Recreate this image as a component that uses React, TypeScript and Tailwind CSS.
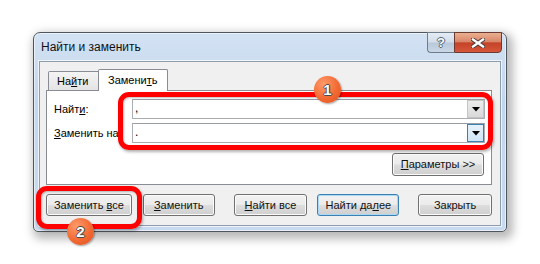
import type { ReactNode } from 'react'

const btnBase =
  'h-[22px] flex items-center justify-center rounded-[3px] border bg-[linear-gradient(180deg,#f2f2f2_0%,#ebebeb_48%,#dddddd_52%,#cfcfcf_100%)] text-[11px] leading-none text-[#111]'

function Btn({ cls, children, def }: { cls: string; children: ReactNode; def?: boolean }) {
  return (
    <div
      className={`${btnBase} ${cls} ${def ? 'border-[#3c7fb1] shadow-[inset_0_0_0_1px_#a9d9f5]' : 'border-[#707070] shadow-[inset_0_0_0_1px_#fbfbfb]'}`}
    >
      <span className="whitespace-pre">{children}</span>
    </div>
  )
}

function Combo({ value, hot }: { value: string; hot?: boolean }) {
  return (
    <div className="flex-1 h-[20px] flex border border-[#abadb3] border-t-[#9a9da5] bg-white">
      <div className="flex-1 pl-[2px] text-[12px] leading-[17px]">{value}</div>
      <div
        className={`w-[17px] h-full flex items-center justify-center border ${hot ? 'border-[#3c7fb1] bg-[linear-gradient(180deg,#e6f2fb_0%,#cfe6f8_100%)]' : 'border-[#c4c4c4] bg-[linear-gradient(180deg,#ececec_0%,#d9d9d9_100%)]'}`}
      >
        <svg width="8" height="5" viewBox="0 0 8 5">
          <path d="M0 0 L8 0 L4 4.5 Z" fill="#000" />
        </svg>
      </div>
    </div>
  )
}

function Badge({ n, cls }: { n: string; cls: string }) {
  return (
    <div
      className={`absolute ${cls} w-[27px] h-[27px] rounded-full flex items-center justify-center bg-[radial-gradient(circle_at_35%_30%,#ff9a6a_0%,#f26a33_55%,#e2501d_100%)] shadow-[1px_1px_2px_rgba(0,0,0,0.35)]`}
    >
      <span className="text-white font-bold text-[15px] leading-none [text-shadow:1px_0_#4a4a4a,-1px_0_#4a4a4a,0_1px_#4a4a4a,0_-1px_#4a4a4a]">
        {n}
      </span>
    </div>
  )
}

export default function App() {
  return (
    <div className="relative w-[540px] h-[264px] overflow-hidden bg-white font-['Liberation_Sans',Arial,sans-serif] text-[11px] text-black">
      <div className="pl-[33px] pt-[32px]">
        {/* окно */}
        <div className="w-[474px] h-[200px] flex flex-col rounded-t-[7px] rounded-b-[5px] border border-[#4f555c] bg-[linear-gradient(180deg,#d3e2f3_0%,#c2d6ed_35%,#c8daef_100%)] px-[5px] pb-[5px] shadow-[3px_4px_10px_3px_rgba(0,0,0,0.28),inset_0_0_0_1px_rgba(255,255,255,0.55)]">
          <div className="h-[28px] flex items-start justify-between">
            <span className="pl-[2px] mt-[6px] text-[12px] leading-[16px] text-[#111]">Найти и заменить</span>
            <div className="-mt-px -mr-px flex">
              <div className="w-[27px] h-[21px] flex items-center justify-center border border-[#6f7c8b] border-r-0 rounded-bl-[4px] bg-[linear-gradient(180deg,#e4ecf4_0%,#d3deea_48%,#b9c9da_52%,#c9d7e5_100%)]">
                <span className="text-white font-bold text-[13px] leading-none [text-shadow:1px_0_#55606c,-1px_0_#55606c,0_1px_#55606c,0_-1px_#55606c]">?</span>
              </div>
              <div className="w-[48px] h-[21px] flex items-center justify-center border border-[#6b3b33] rounded-br-[4px] bg-[linear-gradient(180deg,#eab08f_0%,#d9866a_46%,#c54328_52%,#d5563a_100%)]">
                <svg width="14" height="10" viewBox="0 0 14 10">
                  <path d="M2 1.5 L12 8.5 M12 1.5 L2 8.5" stroke="#4b3a36" strokeWidth="4.2" strokeLinecap="square" />
                  <path d="M2 1.5 L12 8.5 M12 1.5 L2 8.5" stroke="#fff" strokeWidth="2.4" strokeLinecap="square" />
                </svg>
              </div>
            </div>
          </div>

          {/* клиентская область */}
          <div className="flex-1 flex flex-col border border-[#8e9dad] bg-[#f0f0f0] pt-[7px] pl-[6px] pr-[8px] pb-[9px] shadow-[0_0_0_1px_rgba(255,255,255,0.7)]">
            <div className="h-[21px] flex items-end relative z-10">
              <div className="ml-[2px] w-[52px] h-[19px] border border-b-0 border-[#898c95] rounded-t-[2px] bg-[linear-gradient(180deg,#f4f4f4_0%,#e4e4e4_100%)] pl-[8px] leading-[18px]">
                На<span className="underline">й</span>ти
              </div>
              <div className="-ml-[2px] w-[70px] h-[22px] -mb-px border border-b-0 border-[#898c95] rounded-t-[2px] bg-white pl-[9px] leading-[20px]">
                Замени<span className="underline">т</span>ь
              </div>
            </div>
            <div className="h-[95px] flex flex-col border border-[#898c95] bg-white pt-[8px] pl-[7px] pr-[6px]">
              <div className="flex items-center">
                <div className="w-[78px]">
                  Найт<span className="underline">и</span>:
                </div>
                <Combo value="," />
              </div>
              <div className="flex items-center mt-[4px]">
                <div className="w-[78px] whitespace-nowrap">
                  <span className="underline">З</span>аменить на:
                </div>
                <Combo value="." hot />
              </div>
              <div className="mt-[10px] self-end mr-[1px]">
                <Btn cls="w-[92px] h-[23px]">
                  <span className="underline">П</span>араметры &gt;&gt;
                </Btn>
              </div>
            </div>
            <div className="mt-[9px] flex">
              <Btn cls="w-[86px]">
                Заменить <span className="underline">в</span>се
              </Btn>
              <Btn cls="ml-[11px] w-[72px]">
                <span className="underline">З</span>аменить
              </Btn>
              <Btn cls="ml-[19px] w-[74px]">
                <span className="underline">Н</span>айти все
              </Btn>
              <Btn cls="ml-[10px] w-[82px]" def>
                Найти да<span className="underline">л</span>ее
              </Btn>
              <Btn cls="ml-[19px] w-[74px]">Закрыть</Btn>
            </div>
          </div>
        </div>
      </div>

      {/* выделения */}
      <div className="absolute left-[118px] top-[92px] w-[375px] h-[58px] rounded-[11px] border-[5px] border-[#ff0000] shadow-[1px_2px_3px_rgba(0,0,0,0.3),inset_1px_1px_2px_rgba(0,0,0,0.25)]" />
      <div className="absolute left-[36px] top-[186px] w-[106px] h-[43px] rounded-[11px] border-[5px] border-[#ff0000] shadow-[1px_2px_3px_rgba(0,0,0,0.3),inset_1px_1px_2px_rgba(0,0,0,0.25)]" />
      <Badge n="1" cls="left-[314px] top-[76px]" />
      <Badge n="2" cls="left-[67px] top-[218px]" />
    </div>
  )
}
